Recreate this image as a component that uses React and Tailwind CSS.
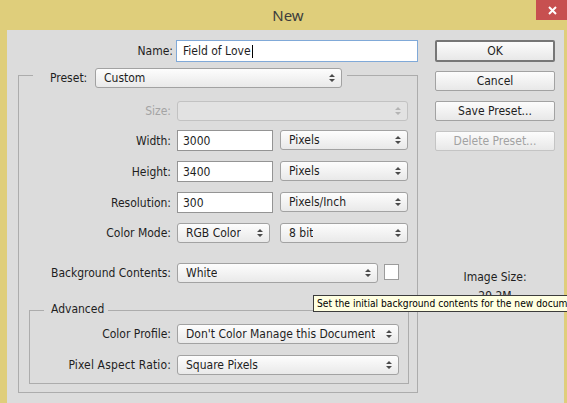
import React from 'react';

function Arrows({ dim }) {
  return (
    <svg width="6" height="10" viewBox="0 0 6 10" className={dim ? 'text-[#b4b4b4]' : 'text-[#4a4a4a]'}>
      <path d="M0 4 L3 1 L6 4 Z M0 6 L3 9 L6 6 Z" fill="currentColor" />
    </svg>
  );
}

function Select({ className = '', value, disabled }) {
  return (
    <div
      className={`flex h-[20px] shrink-0 items-center justify-between rounded-[3px] border pl-[8px] pr-[6px] ${
        disabled
          ? 'border-[#c2c2c2] bg-[#e2e2e2]'
          : 'border-[#a2a2a2] bg-gradient-to-b from-[#fdfdfd] to-[#e9e9e9]'
      } ${className}`}
    >
      <span className="truncate">{value}</span>
      <Arrows dim={disabled} />
    </div>
  );
}

function Field({ className = '', value }) {
  return (
    <div className={`flex h-[21px] shrink-0 items-center border border-[#949494] bg-white pl-[5px] ${className}`}>
      {value}
    </div>
  );
}

function Row({ label, dim, h = 'h-[20px]', className = '', children }) {
  return (
    <div className={`flex items-start ${className}`}>
      <div className={`flex w-[152px] shrink-0 items-center justify-end ${h} ${dim ? 'text-[#a4a4a4]' : ''}`}>{label}</div>
      <div className="ml-[6px] flex items-start">{children}</div>
    </div>
  );
}

function Button({ children, main, disabled, className = '' }) {
  return (
    <div
      className={`flex w-[120px] items-center justify-center rounded-[2px] bg-gradient-to-b from-[#fcfcfc] to-[#e8e8e8] ${
        main
          ? 'h-[22px] border-2 border-[#767676]'
          : disabled
          ? 'h-[20px] border border-[#c4c4c4] text-[#a2a2a2]'
          : 'h-[20px] border border-[#a2a2a2]'
      } ${className}`}
    >
      {children}
    </div>
  );
}

export default function App() {
  return (
    <div className="relative h-[403px] w-[567px] overflow-hidden bg-[#dfce7b] font-['DejaVu_Sans_Condensed','DejaVu_Sans',sans-serif] text-[12px] text-[#1e1e1e]">
      {/* title bar */}
      <div className="flex h-[30px] items-start">
        <div className="flex h-[30px] flex-1 items-center justify-center pl-[40px] font-['Noto_Sans',sans-serif] text-[15px] text-[#3c3c3c]">
          New
        </div>
        <div className="flex h-[20px] w-[31px] items-center bg-[#c75050] pl-[12px]">
          <svg width="9" height="9" viewBox="0 0 9 9">
            <path d="M1 1 L8 8 M8 1 L1 8" stroke="white" strokeWidth="2" />
          </svg>
        </div>
      </div>

      {/* body */}
      <div className="flex h-[373px] pl-[7px] pr-[3px]">
        <div className="flex flex-1 bg-[#dcdcdc] pl-[11px] pt-[10px]">
          {/* left column */}
          <div className="flex w-[400px] flex-col">
            <div className="flex h-[22px] items-center">
              <div className="w-[155px] text-right">Name:</div>
              <div className="ml-[3px] flex h-[22px] w-[242px] items-center border border-[#80a9d8] bg-white pl-[6px]">
                Field of Love
                <span className="ml-[1px] h-[13px] w-px bg-black" />
              </div>
            </div>

            {/* preset group */}
            <div className="mt-[13px] h-[318px] border border-[#acacac]">
              <div className="-mt-[8px] ml-[14px] flex w-fit items-center bg-[#dcdcdc] pl-[17px] pr-[5px]">
                <div className="w-[45px]">Preset:</div>
                <Select className="w-[247px]" value="Custom" />
              </div>

              <Row label="Size:" dim className="mt-[13px]">
                <Select className="w-[231px]" disabled value="" />
              </Row>
              <Row label="Width:" h="h-[21px]" className="mt-[9px]">
                <Field className="w-[96px]" value="3000" />
                <Select className="ml-[7px] w-[128px]" value="Pixels" />
              </Row>
              <Row label="Height:" h="h-[21px]" className="mt-[10px]">
                <Field className="w-[96px]" value="3400" />
                <Select className="ml-[7px] w-[128px]" value="Pixels" />
              </Row>
              <Row label="Resolution:" h="h-[21px]" className="mt-[10px]">
                <Field className="w-[96px]" value="300" />
                <Select className="ml-[7px] w-[128px]" value="Pixels/Inch" />
              </Row>
              <Row label="Color Mode:" className="mt-[10px]">
                <Select className="w-[93px]" value="RGB Color" />
                <Select className="ml-[10px] w-[128px]" value="8 bit" />
              </Row>
              <Row label="Background Contents:" className="mt-[20px]">
                <Select className="w-[201px]" value="White" />
                <div className="ml-[6px] mt-px h-[16px] w-[15px] border border-[#9c9c9c] bg-white" />
              </Row>

              {/* advanced group */}
              <div className="ml-[10px] mr-[8px] mt-[27px] h-[74px] border border-[#acacac]">
                <div className="-mt-[10px] ml-[14px] flex h-[16px] w-fit items-center bg-[#dcdcdc] pl-[7px] pr-[4px]">
                  Advanced
                </div>
                <div className="mt-[7px] flex items-start">
                  <div className="flex h-[20px] w-[141px] items-center justify-end">Color Profile:</div>
                  <Select className="ml-[6px] w-[222px]" value="Don't Color Manage this Document" />
                </div>
                <div className="mt-[11px] flex items-start">
                  <div className="flex h-[20px] w-[141px] items-center justify-end tracking-[0.15px]">Pixel Aspect Ratio:</div>
                  <Select className="ml-[6px] w-[222px]" value="Square Pixels" />
                </div>
              </div>
            </div>
          </div>

          {/* right column */}
          <div className="ml-[17px] flex w-[120px] flex-col items-center">
            <Button main>OK</Button>
            <Button className="mt-[9px]">Cancel</Button>
            <Button className="mt-[10px]">Save Preset...</Button>
            <Button className="mt-[10px]" disabled>Delete Preset...</Button>
            <div className="mt-[118px] flex h-[16px] items-center">Image Size:</div>
            <div className="mt-[3px] flex h-[16px] items-center">29.2M</div>
          </div>
        </div>
      </div>

      {/* tooltip */}
      <div className="absolute left-[313px] top-[295px] flex h-[17px] w-[280px] items-center whitespace-nowrap border border-[#3c3c3c] bg-[#ffffe1] pl-[3px] text-[10.2px] text-black">
        Set the initial background contents for the new document.
      </div>
    </div>
  );
}
